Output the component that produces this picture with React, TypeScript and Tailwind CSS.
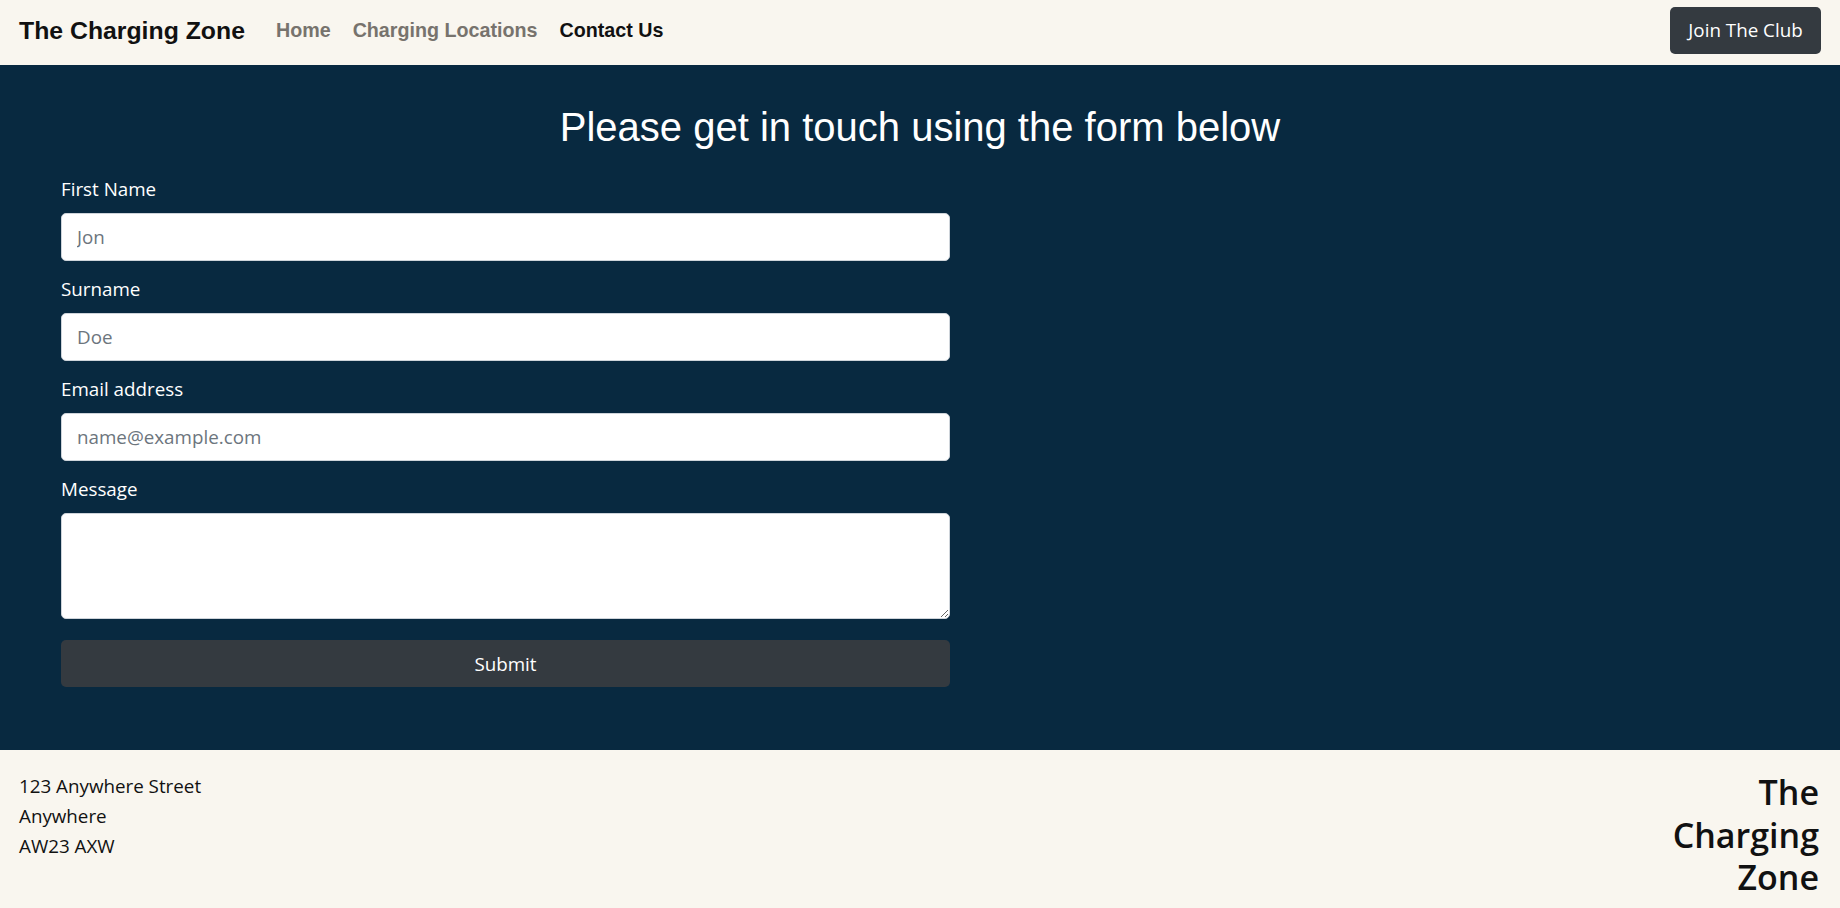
const sans = "font-['Open_Sans','Noto_Sans',sans-serif]"

function Field({ label, placeholder, type = 'text' }: { label: string; placeholder: string; type?: string }) {
  return (
    <div className="flex flex-col">
      <label className="h-[28px] text-[18.8px] leading-[28px] text-white">{label}</label>
      <input
        type={type}
        placeholder={placeholder}
        className="mt-[10px] h-[48px] w-full rounded-[5px] border border-[#ced4da] bg-white px-[15px] text-[18.8px] text-[#212529] placeholder:text-[#6c757d] outline-none"
      />
    </div>
  )
}

export default function App() {
  return (
    <div className={`flex min-h-screen flex-col bg-[#f9f6ef] ${sans}`}>
      {/* Top navbar */}
      <header className="flex h-[65px] items-center bg-[#f9f6ef] px-[19px] pb-[4px]">
        <span className="mr-[31px] font-['Liberation_Sans',Arial,sans-serif] text-[24.8px] font-bold text-[#111]">
          The Charging Zone
        </span>
        <nav className="flex items-center gap-[22px] font-['Liberation_Sans',Arial,sans-serif] text-[19.7px] font-bold">
          <a className="text-[#77736d]">Home</a>
          <a className="text-[#77736d]">Charging Locations</a>
          <a className="text-[#111]">Contact Us</a>
        </nav>
        <button className="ml-auto flex h-[47px] w-[151px] items-center justify-center rounded-[5px] bg-[#343a40] text-[18.8px] text-white">
          Join The Club
        </button>
      </header>

      {/* Contact form */}
      <main className="bg-[#082940] px-[61px] pb-[63px] pt-[38px]">
        <h1 className="text-center font-['Liberation_Sans',Arial,sans-serif] text-[40px] leading-[48px] text-white">
          Please get in touch using the form below
        </h1>

        <form className="mt-[24px] flex w-[889px] flex-col gap-[14px]">
          <Field label="First Name" placeholder="Jon" />
          <Field label="Surname" placeholder="Doe" />
          <Field label="Email address" placeholder="name@example.com" type="email" />
          <div className="flex flex-col">
            <label className="h-[28px] text-[18.8px] leading-[28px] text-white">Message</label>
            <textarea className="mt-[10px] h-[106px] w-full rounded-[5px] border border-[#ced4da] bg-white px-[15px] py-[8px] text-[18.8px] outline-none" />
          </div>
          <button
            type="button"
            className="mt-[7px] flex h-[47px] w-full items-center justify-center rounded-[5px] bg-[#343a40] pt-[2px] text-[18.8px] text-white"
          >
            Submit
          </button>
        </form>
      </main>

      {/* Footer */}
      <footer className="flex flex-1 items-start justify-between bg-[#f9f6ef] pl-[19px] pr-[21px] pt-[20px] pb-[10px]">
        <div className="pt-[1px] text-[18.8px] leading-[30px] text-[#111]">
          <p>123 Anywhere Street</p>
          <p>Anywhere</p>
          <p>AW23 AXW</p>
        </div>
        <h2 className="mt-[1px] w-[160px] text-right text-[34px] font-semibold leading-[42.5px] text-[#111]">
          The Charging Zone
        </h2>
      </footer>
    </div>
  )
}
